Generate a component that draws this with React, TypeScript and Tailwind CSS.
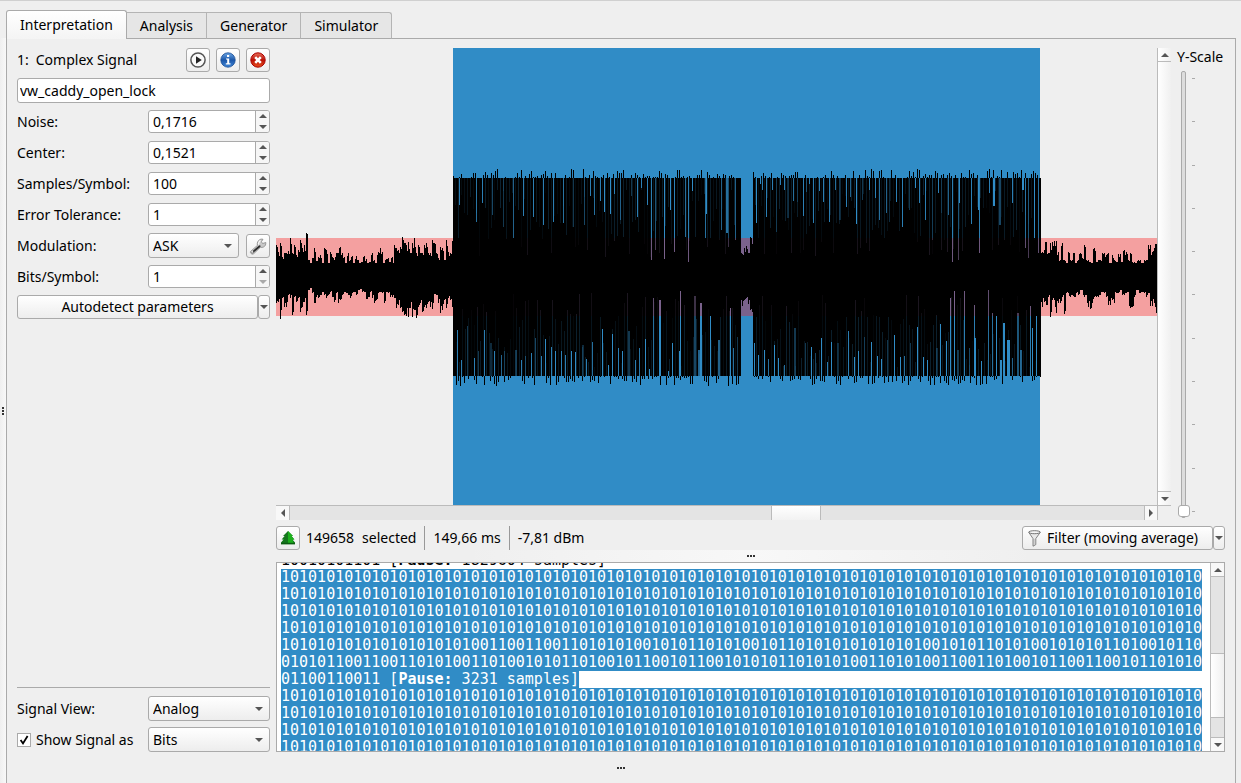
import { useId, useState } from "react";
import type { ReactNode } from "react";

const SELECTION = "#308cc6";
const NOISE = "#f4a0a0";
const NOISE_SELECTED = "#7a628c";

const VIEW_W = 881;
const VIEW_H = 457;
const SEL_START = 177;
const SEL_END = 764;
const NOISE_TOP = 190;
const NOISE_BOTTOM = 268;
const BURST_TOP = 130;
const BURST_BOTTOM = 328;

/* Envelope samples of the quiet parts: distance of the peaks from the top, in view units. */
const leadTops = [
  197, 204, 195, 209, 205, 205, 203, 190, 205, 197, 207, 202, 192, 200, 197, 185, 212, 215, 210, 200,
  213, 209, 207, 215, 200, 202, 215, 204, 209, 212, 205, 205, 199, 205, 209, 215, 205, 212, 208, 215,
  208, 212, 215, 214, 208, 211, 215, 214, 205, 212, 215, 204, 200, 204, 215, 211, 210, 214, 209, 215,
  197, 200, 202, 199, 189, 195, 197, 194, 205, 195, 190, 205, 197, 205, 205, 197, 195, 205, 205, 192,
  195, 205, 210, 199, 200, 212, 192, 204, 205, 193,
];
const leadBottoms = [
  255, 254, 271, 250, 259, 259, 247, 250, 267, 249, 254, 250, 264, 259, 254, 267, 242, 240, 245, 255,
  249, 250, 247, 244, 247, 250, 247, 244, 249, 254, 245, 255, 252, 247, 244, 245, 247, 250, 245, 244,
  247, 242, 241, 244, 244, 251, 249, 244, 250, 255, 252, 245, 244, 245, 255, 244, 245, 249, 249, 250,
  260, 257, 260, 264, 267, 268, 269, 260, 269, 262, 270, 259, 255, 264, 259, 260, 254, 259, 261, 246,
  247, 255, 265, 262, 252, 260, 250, 252, 259,
];
const pauseTops = [204, 206, 200, 198, 205, 189, 196];
const pauseBottoms = [255, 258, 252, 250, 256, 262, 264];
const tailTops = [
  204, 202, 194, 205, 195, 194, 193, 204, 212, 195, 212, 215, 204, 212, 205, 215, 212, 205, 210, 197,
  212, 214, 215, 200, 214, 212, 212, 205, 207, 205, 215, 207, 212, 214, 206, 214, 202, 204, 212, 205,
  214, 215, 212, 212, 215, 212, 212, 197, 204, 200, 196,
];
const tailBottoms = [
  259, 254, 257, 249, 269, 252, 265, 255, 255, 249, 266, 245, 249, 247, 249, 245, 247, 242, 249, 247,
  259, 261, 255, 249, 249, 247, 244, 245, 249, 257, 252, 255, 245, 245, 242, 247, 245, 244, 260, 259,
  249, 242, 245, 244, 245, 249, 245, 258, 255, 265,
];

/* Low phases inside the bursts: [x, reach, strength, width]. */
type Gap = [number, number, number, number?];
const upperGaps: Gap[] = [
  [183, 157, 0.9], [200, 174, 0.8], [206, 155, 0.9], [216, 167, 0.5], [227, 179, 0.4], [237, 190, 0.7],
  [247, 168, 0.9], [257, 169, 0.9], [267, 177, 0.9], [277, 174, 0.9], [287, 175, 0.8], [297, 179, 0.4],
  [308, 177, 0.5], [314, 148, 0.9], [318, 167, 0.8], [324, 153, 0.9], [328, 164, 1], [334, 166, 1],
  [338, 146, 0.9], [344, 172, 0.6], [355, 148, 0.4], [361, 169, 0.9], [365, 140, 0.9], [371, 157, 0.9],
  [375, 212, 0.9], [379, 202, 0.6], [388, 211, 1], [394, 162, 1], [398, 204, 0.9], [409, 189, 0.8],
  [412, 214, 0.9], [416, 143, 1], [429, 190, 0.8], [430, 166, 1], [445, 182, 0.7], [450, 185, 0.8, 2],
  [452, 199, 0.5], [459, 192, 0.7], [480, 175, 1], [484, 136, 1], [486, 142, 0.9], [490, 169, 0.9],
  [496, 142, 0.9], [500, 184, 0.4], [504, 137, 0.9], [508, 142, 0.9], [511, 170, 0.3, 2], [517, 153, 0.8],
  [521, 154, 0.3], [527, 168, 0.9], [530, 144, 0.5], [533, 136, 0.9], [537, 175, 0.9], [543, 143, 0.9],
  [547, 154, 0.9], [553, 174, 0.9], [559, 142, 0.8], [563, 172, 0.3, 2], [570, 159, 0.9], [574, 149, 0.7],
  [580, 176, 1], [586, 152, 0.4], [593, 142, 0.9], [599, 150, 0.9], [603, 172, 0.8], [610, 165, 0.7],
  [613, 174, 0.3], [620, 154, 0.9], [626, 179, 0.9], [633, 162, 0.4], [639, 140, 1], [643, 155, 0.9],
  [649, 172, 0.9], [656, 192, 0.4], [662, 145, 0.9], [665, 165, 0.3], [672, 167, 0.7], [676, 214, 0.9],
  [682, 212, 0.6], [683, 155, 1], [695, 176, 0.9], [702, 162, 1], [703, 205, 0.9], [713, 145, 0.9],
  [717, 158, 1, 2], [723, 177, 0.5, 2], [736, 155, 0.9], [746, 142, 1, 2], [749, 200, 0.8], [752, 210, 0.6],
  [758, 190, 1], [762, 205, 0.8],
];
const lowerGaps: Gap[] = [
  [181, 282, 0.9], [185, 312, 0.9], [191, 278, 0.4], [198, 310, 0.9], [202, 303, 0.4], [208, 282, 0.9],
  [214, 295, 0.3, 2], [218, 303, 0.9], [225, 307, 0.7], [228, 303, 0.4], [239, 302, 0.4, 2], [245, 312, 0.9],
  [249, 308, 0.5], [255, 305, 0.9], [259, 290, 0.5], [265, 308, 0.9], [269, 291, 1], [275, 299, 0.9],
  [279, 303, 1], [285, 303, 0.9], [289, 307, 0.9], [295, 303, 1], [299, 304, 1], [306, 297, 0.3, 2],
  [310, 311, 0.9], [316, 294, 0.8], [326, 281, 1], [332, 317, 1], [336, 286, 1], [342, 300, 0.9],
  [346, 303, 1], [352, 283, 0.4, 2], [359, 312, 0.9], [363, 300, 0.8], [369, 291, 1], [373, 321, 1],
  [377, 250, 0.8], [383, 252, 1, 2], [392, 323, 1], [396, 295, 1], [403, 303, 1], [404, 243, 1],
  [418, 248, 0.5, 2], [422, 302, 0.7, 2], [424, 255, 1, 2], [434, 268, 1], [442, 292, 0.7, 2], [454, 260, 1],
  [457, 300, 0.8], [461, 289, 0.4], [478, 295, 1], [482, 307, 1], [488, 302, 1], [492, 311, 0.8],
  [498, 297, 1], [502, 310, 1], [508, 317, 0.8], [518, 280, 0.4, 2], [529, 295, 0.4], [535, 299, 1],
  [539, 305, 0.5], [545, 290, 1], [551, 314, 0.9], [555, 294, 1], [561, 295, 0.3, 2], [572, 283, 0.9],
  [578, 309, 1], [582, 303, 1], [588, 289, 0.4], [595, 294, 1], [601, 308, 1], [605, 311, 1],
  [611, 292, 0.4], [618, 287, 1], [624, 309, 1], [628, 308, 0.8], [634, 295, 0.4], [641, 279, 1],
  [647, 309, 1], [651, 312, 1], [660, 300, 0.3, 2], [664, 276, 1], [670, 293, 1], [674, 250, 1],
  [678, 243, 1], [681, 302, 0.4, 2], [688, 243, 0.9], [693, 300, 0.5], [698, 257, 0.9], [698, 290, 1, 2],
  [705, 313, 1], [712, 242, 0.8], [716, 265, 0.8], [720, 268, 1], [724, 312, 1, 2], [727, 275, 1, 2],
  [731, 292, 1, 3], [736, 310, 0.7], [741, 265, 0.6, 2], [744, 302, 0.7, 2], [754, 258, 0.9], [756, 280, 1],
  [760, 268, 1],
];

function makeRandom(seed: number) {
  let state = seed;
  return () => {
    state = (state * 1664525 + 1013904223) % 4294967296;
    return state / 4294967296;
  };
}

function quietPath(start: number, width: number, tops: number[], bottoms: number[], seed: number) {
  const random = makeRandom(seed);
  let d = "";
  for (let i = 0; i < width; i++) {
    const top = tops[Math.min(tops.length - 1, Math.floor((i / width) * tops.length))];
    const bottom = bottoms[Math.min(bottoms.length - 1, Math.floor((i / width) * bottoms.length))];
    const a = i % 2 ? top + random() * (216 - top) * 0.35 : top;
    const b = i % 2 ? bottom - random() * (bottom - 242) * 0.35 : bottom;
    d += `M${start + i} ${a.toFixed(1)}h1V${b.toFixed(1)}h-1z`;
  }
  return d;
}

function burstPath(start: number, end: number, seed: number) {
  const random = makeRandom(seed);
  let d = `M${start} ${BURST_TOP}H${end}V${BURST_BOTTOM}H${start}z`;
  for (let x = start; x < end - 1; x += 2) {
    if (random() > 0.2) {
      const up = random() ** 2 * 9;
      d += `M${x} ${(BURST_TOP - up).toFixed(1)}h1V${BURST_TOP}h-1z`;
    }
    if (random() > 0.2) {
      const down = random() ** 2 * 10;
      d += `M${x + 1} ${BURST_BOTTOM}h1v${down.toFixed(1)}h-1z`;
    }
  }
  return d;
}

function faintGaps(start: number, end: number, seed: number) {
  const random = makeRandom(seed);
  const upper: Gap[] = [];
  const lower: Gap[] = [];
  for (let x = start + 2; x < end - 3; x += 3) {
    upper.push([x, 140 + random() * 70, 0.04 + random() * 0.2]);
    lower.push([x + 1, 320 - random() * 75, 0.04 + random() * 0.2]);
  }
  return { upper, lower };
}

function GapBars({ gaps, upper }: { gaps: Gap[]; upper: boolean }) {
  return (
    <>
      {gaps.map(([x, reach, strength, width = 1], i) => {
        const edge = upper ? Math.min(reach, NOISE_TOP) : Math.max(reach, NOISE_BOTTOM);
        const crosses = upper ? reach > NOISE_TOP : reach < NOISE_BOTTOM;
        return (
          <g key={i} opacity={strength}>
            <rect
              x={x}
              width={width}
              y={upper ? BURST_TOP : edge}
              height={upper ? edge - BURST_TOP : BURST_BOTTOM - edge}
              fill={SELECTION}
            />
            {crosses && (
              <rect
                x={x}
                width={width}
                y={upper ? NOISE_TOP : reach}
                height={upper ? reach - NOISE_TOP : NOISE_BOTTOM - reach}
                fill={NOISE_SELECTED}
              />
            )}
          </g>
        );
      })}
    </>
  );
}

const firstFaint = faintGaps(177, 464, 11);
const secondFaint = faintGaps(477, 764, 29);
const waveform = [
  quietPath(0, 177, leadTops, leadBottoms, 3),
  quietPath(464, 13, pauseTops, pauseBottoms, 5),
  quietPath(764, 117, tailTops, tailBottoms, 7),
  burstPath(177, 465, 13),
  burstPath(477, 765, 17),
].join("");

function SignalPlot() {
  return (
    <svg
      role="img"
      aria-label="Signal"
      viewBox={`0 0 ${VIEW_W} ${VIEW_H}`}
      preserveAspectRatio="none"
      shapeRendering="crispEdges"
      className="block h-full w-full"
    >
      <rect x="0" y={NOISE_TOP} width={VIEW_W} height={NOISE_BOTTOM - NOISE_TOP} fill={NOISE} />
      <rect x={SEL_START} y="0" width={SEL_END - SEL_START} height={VIEW_H} fill={SELECTION} />
      <rect
        x={SEL_START}
        y={NOISE_TOP}
        width={SEL_END - SEL_START}
        height={NOISE_BOTTOM - NOISE_TOP}
        fill={NOISE_SELECTED}
      />
      <path d={waveform} fill="#000" />
      <GapBars upper gaps={[...firstFaint.upper, ...secondFaint.upper, ...upperGaps]} />
      <GapBars upper={false} gaps={[...firstFaint.lower, ...secondFaint.lower, ...lowerGaps]} />
    </svg>
  );
}

type Direction = "up" | "down" | "left" | "right";
const arrowPoints: Record<Direction, string> = {
  up: "0,4 4,0 8,4",
  down: "0,0 8,0 4,4",
  left: "4,0 4,8 0,4",
  right: "0,0 4,4 0,8",
};

function Arrow({ direction, faded = false }: { direction: Direction; faded?: boolean }) {
  const upright = direction === "up" || direction === "down";
  return (
    <svg
      aria-hidden="true"
      width={upright ? 8 : 4}
      height={upright ? 4 : 8}
      className={faded ? "shrink-0 fill-[#aaa]" : "shrink-0 fill-[#555]"}
    >
      <polygon points={arrowPoints[direction]} />
    </svg>
  );
}

function ToolButton({ label, children }: { label: string; children: ReactNode }) {
  return (
    <button
      type="button"
      aria-label={label}
      className="flex size-6 shrink-0 items-center justify-center rounded-[3px] border border-[#aaa] bg-linear-to-b from-white to-[#ededed]"
    >
      {children}
    </button>
  );
}

function SpinRow({ label, value, atMinimum = false }: { label: string; value: string; atMinimum?: boolean }) {
  const id = useId();
  return (
    <div className="flex items-center">
      <label htmlFor={id} className="flex-1">
        {label}
      </label>
      <div className="flex h-[23px] w-[122px] overflow-hidden rounded-[3px] border border-[#aaa] bg-white">
        <input id={id} type="text" defaultValue={value} className="min-w-0 flex-1 pl-1 outline-none" />
        <div className="flex w-[14px] flex-col border-l border-[#aaa] bg-[#f6f6f6]">
          <button type="button" aria-label={`Increase ${label}`} className="flex flex-1 items-center justify-center">
            <Arrow direction="up" />
          </button>
          <button type="button" aria-label={`Decrease ${label}`} className="flex flex-1 items-center justify-center">
            <Arrow direction="down" faded={atMinimum} />
          </button>
        </div>
      </div>
    </div>
  );
}

function Combo({ id, value, options, label }: { id?: string; value: string; options: string[]; label?: string }) {
  return (
    <div className="relative flex h-[25px] min-w-0 flex-1">
      <select
        id={id}
        aria-label={label}
        defaultValue={value}
        className="w-full appearance-none rounded-[3px] border border-[#aaa] bg-linear-to-b from-white to-[#ededed] pl-1 outline-none"
      >
        {options.map((option) => (
          <option key={option}>{option}</option>
        ))}
      </select>
      <span className="pointer-events-none absolute inset-y-0 right-[7px] flex items-center">
        <Arrow direction="down" />
      </span>
    </div>
  );
}

function PlayIcon() {
  return (
    <svg aria-hidden="true" width="16" height="16" viewBox="0 0 16 16">
      <circle cx="8" cy="8" r="7.1" fill="#fafafa" stroke="#555" strokeWidth="1.5" />
      <path d="M6 4.2v7.6L11.8 8z" fill="#222" />
    </svg>
  );
}

function InfoIcon() {
  return (
    <svg aria-hidden="true" width="16" height="16" viewBox="0 0 16 16">
      <defs>
        <linearGradient id="info-fill" x1="0" y1="0" x2="0" y2="1">
          <stop offset="0" stopColor="#6ba6e6" />
          <stop offset="0.5" stopColor="#1b56a8" />
          <stop offset="1" stopColor="#3f86d8" />
        </linearGradient>
      </defs>
      <circle cx="8" cy="8" r="7.2" fill="url(#info-fill)" stroke="#174a92" strokeWidth="0.8" />
      <path d="M7 3h2.2v2H7zM6 6.4h3.2v4.8h1.3v1.2H5.8v-1.2h1.4V7.6H6z" fill="#fff" />
    </svg>
  );
}

function CloseIcon() {
  return (
    <svg aria-hidden="true" width="16" height="16" viewBox="0 0 16 16">
      <defs>
        <linearGradient id="close-fill" x1="0" y1="0" x2="0" y2="1">
          <stop offset="0" stopColor="#e8705a" />
          <stop offset="0.5" stopColor="#bb1006" />
          <stop offset="1" stopColor="#e8501c" />
        </linearGradient>
      </defs>
      <circle cx="8" cy="8" r="7.2" fill="url(#close-fill)" stroke="#a00" strokeWidth="1" />
      <path d="M5.2 5.2l5.6 5.6M10.8 5.2l-5.6 5.6" stroke="#fff" strokeWidth="2.6" />
    </svg>
  );
}

function WrenchIcon() {
  return (
    <svg aria-hidden="true" width="18" height="18" viewBox="0 0 18 18">
      <path
        d="M1.6 14.4 8.4 8.4C7.8 6 8.8 3.4 11.2 2.4c1-.4 2-.4 2.8-.1l-1.6 2.4 1.2 1.8 3.2-1c.2 2-.6 3.8-2.4 4.6-1 .4-2 .5-3 .2L4.8 16.6c-.8.7-1.9.7-2.6 0-.7-.6-1.2-1.6-.6-2.2z"
        fill="#c9c9c9"
        stroke="#888"
        strokeWidth="0.8"
      />
      <path d="M3.4 15.4 10.6 9.2" stroke="#2e2e2e" strokeWidth="1.8" strokeLinecap="round" />
      <path d="M9.6 7.6c-.2-1.8.6-3.2 2-4" fill="none" stroke="#fafafa" strokeWidth="1.2" />
      <circle cx="3.4" cy="14.9" r="0.9" fill="#eee" />
    </svg>
  );
}

function TreeIcon() {
  return (
    <svg aria-hidden="true" width="16" height="16" viewBox="0 0 16 16">
      <path d="M8 1 3 6h1.6L1.6 9.6h2L1 12.6v1.6h14v-1.6l-2.6-3h2L11.4 6H13z" fill="#14761c" />
      <path d="M8 1v12h5.6l-1.2-3.4h2L11.4 6H13z" fill="#1cb01c" />
      <path d="M1 12.8h14v1.4H1z" fill="#0c5c12" />
    </svg>
  );
}

function FunnelIcon() {
  return (
    <svg aria-hidden="true" width="13" height="17" viewBox="0 0 13 17">
      <path d="M.8 2.4 5 8.6v7.6l2.8-1.6v-6L12.2 2.4z" fill="#e9e9e9" stroke="#777" strokeWidth="0.9" />
      <ellipse cx="6.5" cy="2.2" rx="5.8" ry="1.5" fill="#f6f6f6" stroke="#666" strokeWidth="0.9" />
      <path d="M5.9 9v5.6" stroke="#aaa" />
    </svg>
  );
}

function Dots() {
  return (
    <div className="flex gap-px">
      <span className="size-[2px] bg-[#333]" />
      <span className="size-[2px] bg-[#333]" />
      <span className="size-[2px] bg-[#333]" />
    </div>
  );
}

function ControlPanel() {
  const modulationId = useId();
  const viewId = useId();
  const [shown, setShown] = useState(true);
  return (
    <aside className="flex w-[253px] shrink-0 flex-col">
      <div className="flex items-center gap-[6px]">
        <span className="flex flex-1 gap-[7px]">
          <span>1:</span>
          <span>Complex Signal</span>
        </span>
        <ToolButton label="Start replay">
          <PlayIcon />
        </ToolButton>
        <ToolButton label="Signal details">
          <InfoIcon />
        </ToolButton>
        <ToolButton label="Close signal">
          <CloseIcon />
        </ToolButton>
      </div>
      <input
        type="text"
        aria-label="Signal name"
        defaultValue="vw_caddy_open_lock"
        className="mt-[6px] h-[25px] rounded-[3px] border border-[#aaa] bg-white px-[2px] outline-none"
      />
      <div className="mt-[7px] flex flex-col gap-2">
        <SpinRow label="Noise:" value="0,1716" />
        <SpinRow label="Center:" value="0,1521" />
        <SpinRow label="Samples/Symbol:" value="100" />
        <SpinRow label="Error Tolerance:" value="1" />
      </div>
      <div className="mt-[7px] flex items-center">
        <label htmlFor={modulationId} className="flex-1">
          Modulation:
        </label>
        <div className="flex w-[122px] items-center gap-[7px]">
          <Combo id={modulationId} value="ASK" options={["ASK", "FSK", "PSK"]} />
          <ToolButton label="Modulation settings">
            <WrenchIcon />
          </ToolButton>
        </div>
      </div>
      <div className="mt-[7px]">
        <SpinRow label="Bits/Symbol:" value="1" atMinimum />
      </div>
      <div className="mt-[7px] flex h-6">
        <button
          type="button"
          className="flex-1 rounded-[3px] border border-[#aaa] bg-linear-to-b from-white to-[#ededed]"
        >
          Autodetect parameters
        </button>
        <button
          type="button"
          aria-label="Autodetect options"
          className="flex w-3 items-center justify-center rounded-[3px] border border-[#aaa] bg-linear-to-b from-white to-[#ededed]"
        >
          <Arrow direction="down" />
        </button>
      </div>
      <hr className="mt-auto mb-2 border-[#aaa]" />
      <div className="flex items-center">
        <label htmlFor={viewId} className="flex-1">
          Signal View:
        </label>
        <div className="flex w-[122px]">
          <Combo id={viewId} value="Analog" options={["Analog", "Demodulated", "Spectrogram"]} />
        </div>
      </div>
      <div className="mt-[6px] flex items-center">
        <label className="flex flex-1 items-center gap-[5px]">
          <span className="relative flex size-[14px]">
            <input
              type="checkbox"
              checked={shown}
              onChange={(event) => setShown(event.target.checked)}
              className="size-[14px] appearance-none border border-[#aaa] bg-white"
            />
            {shown && (
              <svg
                aria-hidden="true"
                viewBox="0 0 14 14"
                className="pointer-events-none absolute inset-0 size-[14px]"
              >
                <path d="M3.6 7 6 10.4 10.6 3" fill="none" stroke="#000" strokeWidth="1.8" />
              </svg>
            )}
          </span>
          Show Signal as
        </label>
        <div className="flex w-[122px]">
          <Combo label="Signal encoding" value="Bits" options={["Bits", "Hex", "ASCII"]} />
        </div>
      </div>
    </aside>
  );
}

function YScale() {
  const id = useId();
  return (
    <div className="flex w-12 flex-col">
      <label htmlFor={id} className="leading-[18px]">
        Y-Scale
      </label>
      <div className="mt-[3px] flex flex-1 gap-[3px]">
        <div className="relative w-3">
          <input
            id={id}
            type="range"
            min={0}
            max={100}
            defaultValue={0}
            className="absolute inset-0 h-full w-3 appearance-none bg-transparent [direction:rtl] [writing-mode:vertical-lr] [&::-webkit-slider-runnable-track]:mx-[2px] [&::-webkit-slider-runnable-track]:h-full [&::-webkit-slider-runnable-track]:w-[5px] [&::-webkit-slider-runnable-track]:rounded-[2px] [&::-webkit-slider-runnable-track]:border [&::-webkit-slider-runnable-track]:border-[#aaa] [&::-webkit-slider-runnable-track]:bg-[#ddd] [&::-webkit-slider-thumb]:-ml-1 [&::-webkit-slider-thumb]:size-3 [&::-webkit-slider-thumb]:appearance-none [&::-webkit-slider-thumb]:rounded-[3px] [&::-webkit-slider-thumb]:border [&::-webkit-slider-thumb]:border-[#aaa] [&::-webkit-slider-thumb]:bg-white"
          />
        </div>
        <div aria-hidden="true" className="flex flex-col justify-between pt-[9px] pb-2">
          {Array.from({ length: 11 }, (_, i) => (
            <span key={i} className="h-px w-[3px] bg-[#aaa]" />
          ))}
        </div>
      </div>
    </div>
  );
}

function SignalArea() {
  return (
    <div className="flex min-h-0 flex-1 gap-[6px]">
      <div className="flex min-w-0 flex-1 flex-col">
        <div className="flex min-h-0 flex-1">
          <div className="relative min-w-0 flex-1">
            <div className="absolute inset-0">
              <SignalPlot />
            </div>
          </div>
          <div className="flex w-[14px] flex-col border-l border-[#bbb] bg-linear-to-r from-white to-[#f0f0f0]">
            <button
              type="button"
              aria-label="Scroll up"
              className="flex h-[14px] items-center justify-center border-b border-[#bbb]"
            >
              <Arrow direction="up" />
            </button>
            <div className="flex-1" />
            <button
              type="button"
              aria-label="Scroll down"
              className="flex h-[14px] items-center justify-center border-t border-[#bbb]"
            >
              <Arrow direction="down" />
            </button>
          </div>
        </div>
        <div className="flex">
          <div className="flex h-[15px] flex-1 border-t border-[#bbb] bg-[#e4e4e4]">
            <button
              type="button"
              aria-label="Scroll left"
              className="flex w-[14px] items-center justify-center border-r border-[#bbb] bg-[#f8f8f8]"
            >
              <Arrow direction="left" />
            </button>
            <div className="flex-[482]" />
            <div className="flex-[48] border-x border-[#bbb] bg-linear-to-b from-white to-[#f2f2f2]" />
            <div className="flex-[324]" />
            <button
              type="button"
              aria-label="Scroll right"
              className="flex w-[14px] items-center justify-center border-x border-[#bbb] bg-[#f8f8f8]"
            >
              <Arrow direction="right" />
            </button>
          </div>
          <div className="w-[13px] border-t border-[#bbb]" />
        </div>
      </div>
      <YScale />
    </div>
  );
}

function InfoBar() {
  return (
    <div className="mt-[6px] flex items-center">
      <ToolButton label="Hide selection details">
        <TreeIcon />
      </ToolButton>
      <span className="ml-[6px] flex gap-2 pr-2">
        <span>149658</span>
        <span>selected</span>
      </span>
      <span className="flex h-6 items-center border-l border-[#999] px-2">149,66 ms</span>
      <span className="flex h-6 items-center border-l border-[#999] px-2">-7,81 dBm</span>
      <div className="ml-auto flex h-6">
        <button
          type="button"
          className="flex items-center gap-[6px] rounded-[3px] border border-[#aaa] bg-linear-to-b from-white to-[#ededed] pr-[14px] pl-[5px]"
        >
          <FunnelIcon />
          Filter (moving average)
        </button>
        <button
          type="button"
          aria-label="Filter options"
          className="flex w-3 items-center justify-center rounded-[3px] border border-[#aaa] bg-linear-to-b from-white to-[#ededed]"
        >
          <Arrow direction="down" />
        </button>
      </div>
    </div>
  );
}

const preamble = "10".repeat(51);
const messageLines = [
  preamble,
  preamble,
  preamble,
  preamble,
  "10".repeat(11) + "011001100110101010010101101010" + "01011010101010101010010101101010010101011010010110",
  "0101011001100110101001101001010110100101100101100101" + "01011010101001101010011001101001011001100101101010",
];

function SelectedLine({ children }: { children: ReactNode }) {
  return <div className="w-fit bg-[#308cc6] text-white">{children}</div>;
}

function BitView() {
  return (
    <div className="flex h-[190px] border border-[#aaa] bg-white">
      <div className="min-w-0 flex-1 overflow-hidden pl-1">
        <div className="-mt-[11px] font-['DejaVu_Sans_Mono',monospace] text-[15px] leading-[17px] whitespace-pre">
          <div>
            10010101101 [<b>Pause:</b> 1829604 samples]
          </div>
          {messageLines.map((line, i) => (
            <SelectedLine key={i}>{line}</SelectedLine>
          ))}
          <SelectedLine>
            01100110011 [<b>Pause:</b> 3231 samples]
          </SelectedLine>
          {[0, 1, 2, 3].map((i) => (
            <SelectedLine key={i}>{preamble}</SelectedLine>
          ))}
        </div>
      </div>
      <div className="flex w-[14px] flex-col border-l border-[#bbb] bg-[#e4e4e4]">
        <button
          type="button"
          aria-label="Scroll text up"
          className="flex h-[14px] items-center justify-center border-b border-[#bbb] bg-[#f8f8f8]"
        >
          <Arrow direction="up" />
        </button>
        <div className="flex-[77]" />
        <div className="flex-[64] border-y border-[#bbb] bg-linear-to-r from-white to-[#f0f0f0]" />
        <div className="flex-[19]" />
        <button
          type="button"
          aria-label="Scroll text down"
          className="flex h-[14px] items-center justify-center border-t border-[#bbb] bg-[#f8f8f8]"
        >
          <Arrow direction="down" />
        </button>
      </div>
    </div>
  );
}

const tabs = ["Interpretation", "Analysis", "Generator", "Simulator"];

export default function App() {
  return (
    <div className="flex min-h-screen flex-col border-t border-[#d0d0d0] bg-[#efefef] pt-[9px] font-['Noto_Sans',sans-serif] text-[14px] leading-5 text-black">
      <div role="tablist" className="relative z-10 -mb-px flex items-end pl-[6px]">
        {tabs.map((tab, i) => (
          <button
            key={tab}
            type="button"
            role="tab"
            aria-selected={i === 0}
            className={
              i === 0
                ? "h-[29px] rounded-t-[3px] border border-b-0 border-[#aaa] bg-linear-to-b from-white to-[#f4f4f4] px-[13px]"
                : "h-[27px] border border-l-0 border-[#b4b4b4] border-b-[#aaa] bg-[#e6e6e6] px-[13px] last:rounded-tr-[3px]"
            }
          >
            {tab}
          </button>
        ))}
      </div>
      <div className="flex flex-1">
        <div className="flex w-[6px] items-center justify-center bg-linear-to-r from-[#efefef] to-[#f8f8f8]">
          <div className="rotate-90">
            <Dots />
          </div>
        </div>
        <main className="mr-[5px] flex min-w-0 flex-1 flex-col border border-b-0 border-[#aaa] pt-[9px] pr-[10px] pl-[10px]">
          <div className="flex min-h-0 flex-1 gap-[6px]">
            <ControlPanel />
            <section className="flex min-w-0 flex-1 flex-col">
              <SignalArea />
              <InfoBar />
              <div className="flex h-3 items-center justify-center bg-[linear-gradient(90deg,transparent_20%,#f8f8f8_50%,transparent_80%)]">
                <Dots />
              </div>
              <BitView />
            </section>
          </div>
          <div className="flex h-[31px] items-center justify-center">
            <Dots />
          </div>
        </main>
      </div>
    </div>
  );
}
